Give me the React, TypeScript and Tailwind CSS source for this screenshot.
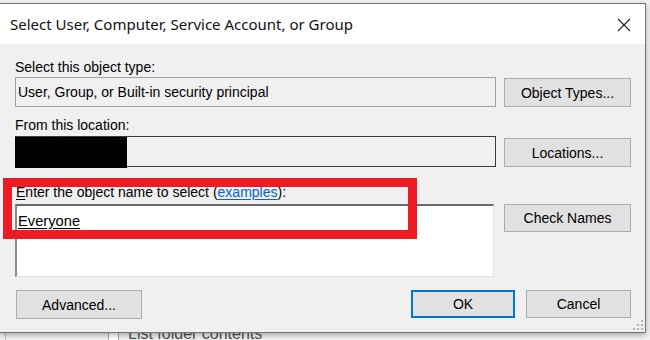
export default function App() {
  const btn =
    "flex items-center justify-center bg-[#e1e1e1] border border-[#adadad] text-[14px] text-black leading-none";
  return (
    <div className="relative w-[650px] h-[340px] overflow-hidden bg-[#e6e6e6] font-['Liberation_Sans',Arial,sans-serif]">
      {/* window underneath */}
      <div className="absolute inset-0 bg-[#f0f0f0]">
        <div className="absolute left-0 top-[324px] w-[650px] h-[20px] flex items-center">
          <div className="ml-[5px] w-px h-[20px] bg-[#c4c4c4]" />
          <div className="ml-[102px] w-[11px] h-[14px] border border-[#a8a8a8] bg-white" />
          <span className="ml-[9px] text-[16px] leading-[20px] text-[#505050]">List folder contents</span>
        </div>
      </div>

      {/* dialog */}
      <div className="absolute left-[-1px] top-[3px] w-[647px] h-[330px] border border-[#767676] bg-[#f0f0f0] flex flex-col shadow-[0_2px_5px_rgba(0,0,0,0.3)]">
        <div className="h-[40px] bg-white flex items-center justify-between pl-[10px] pr-[14px] shrink-0">
          <span className="font-['Noto_Sans','Open_Sans',sans-serif] text-[15px] text-[#111] leading-none">
            Select User, Computer, Service Account, or Group
          </span>
          <svg width="14" height="14" viewBox="0 0 14 14" className="mt-[1px]">
            <path d="M1 1 L13 13 M13 1 L1 13" stroke="#222" strokeWidth="1.1" fill="none" />
          </svg>
        </div>

        <div className="flex-1 flex flex-col pl-[15px] pr-[14px]">
          <div className="mt-[13px] h-[20px] flex items-center text-[14px] text-black">Select this object type:</div>
          <div className="grid grid-cols-[481px_127px] gap-x-[8px]">
            <div className="h-[30px] border border-[#a2a2a2] flex items-center pl-[2px] text-[14px] text-black">
              User, Group, or Built-in security principal
            </div>
            <div className={btn + " mt-[1px] h-[29px]"}>Object Types...</div>
          </div>

          <div className="mt-[8px] h-[20px] flex items-center text-[14px] text-black">From this location:</div>
          <div className="mt-[1px] grid grid-cols-[481px_127px] gap-x-[8px]">
            <div className="h-[31px] border border-[#3a3a3a]" />
            <div className={btn + " mt-[2px] h-[29px]"}>Locations...</div>
          </div>

          <div className="mt-[15px] h-[20px] flex items-center text-[14px] text-black">
            <span className="ml-[1px]">
              <span className="underline underline-offset-2">E</span>nter the object name to select (
              <span className="text-[#0066cc] underline underline-offset-2">examples</span>):
            </span>
          </div>
          <div className="mt-[2px] grid grid-cols-[479px_127px] gap-x-[10px]">
            <div className="h-[73px] bg-white border-t-2 border-l-2 border-r border-b border-t-[#6a6a6a] border-l-[#8a8a8a] border-r-[#e3e3e3] border-b-[#e3e3e3] pl-[1px] pt-[3px]">
              <span className="text-[14.7px] text-black underline underline-offset-2 leading-[17px]">Everyone</span>
            </div>
            <div className={btn + " h-[28px]"}>Check Names</div>
          </div>

          <div className="mt-[13px] flex justify-between">
            <div className={btn + " ml-[1px] w-[126px] h-[29px]"}>Advanced...</div>
            <div className="flex gap-[11px]">
              <div className="w-[104px] h-[28px] flex items-center justify-center bg-[#e1e1e1] border-2 border-[#0078d7] text-[14px] text-black leading-none">
                OK
              </div>
              <div className={btn + " w-[105px] h-[28px]"}>Cancel</div>
            </div>
          </div>
        </div>

        <svg width="12" height="12" viewBox="0 0 12 12" className="absolute right-[1px] bottom-[1px]">
          <g fill="#b4b4b4">
            <rect x="9" y="1" width="2" height="2" />
            <rect x="5" y="5" width="2" height="2" />
            <rect x="9" y="5" width="2" height="2" />
            <rect x="1" y="9" width="2" height="2" />
            <rect x="5" y="9" width="2" height="2" />
            <rect x="9" y="9" width="2" height="2" />
          </g>
        </svg>
      </div>

      {/* redaction */}
      <div className="absolute left-[15px] top-[137px] w-[112px] h-[31px] bg-black" />
      {/* annotation */}
      <div className="absolute left-[3px] top-[178px] w-[414px] h-[61px] border-[9px] border-[#ed1c24]" />
    </div>
  );
}
